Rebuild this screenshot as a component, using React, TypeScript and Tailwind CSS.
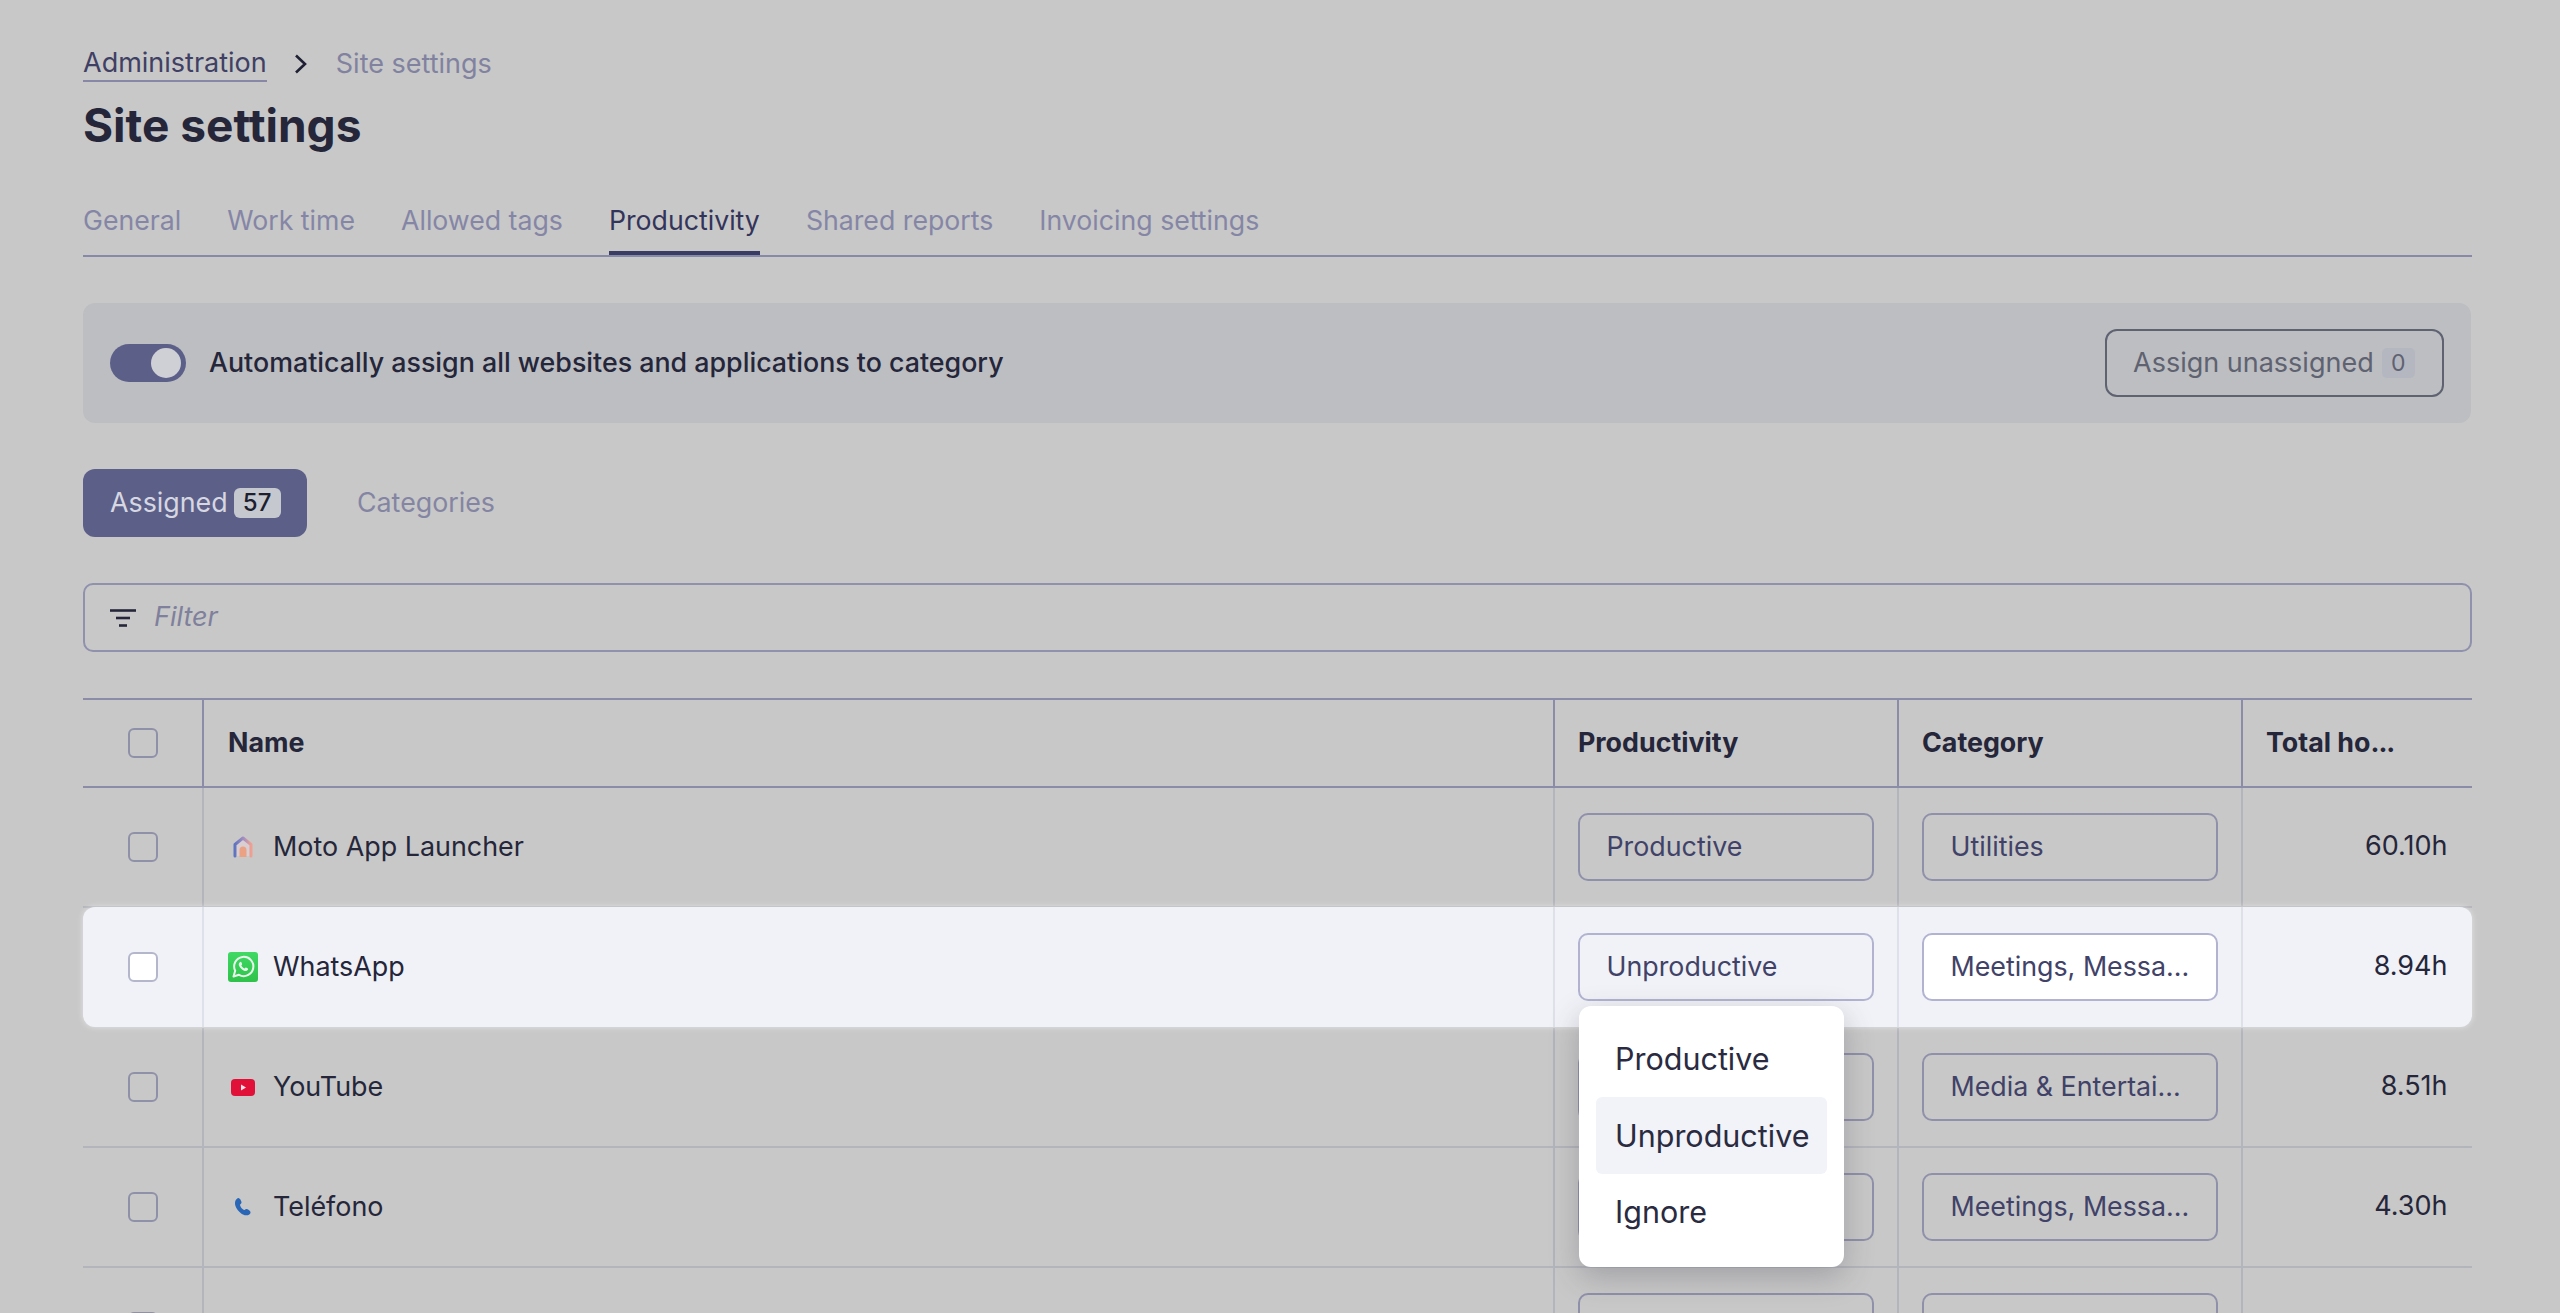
import React from "react";

const tabs = ["General", "Work time", "Allowed tags", "Productivity", "Shared reports", "Invoicing settings"];

function MotoIcon() {
  return (
    <svg width="22" height="24" viewBox="0 0 22 24" fill="none">
      <defs>
        <linearGradient id="moto" x1="0" y1="0" x2="1" y2="0">
          <stop offset="0" stopColor="#5f74c0" />
          <stop offset="0.55" stopColor="#a58fc0" />
          <stop offset="1" stopColor="#f0a090" />
        </linearGradient>
      </defs>
      <path d="M3 21 V9.5 L11 3 L19 9.5 V21 Z" fill="#d9ced2" />
      <path d="M3 21 V9.5 L11 3 L19 9.5 V21" stroke="url(#moto)" strokeWidth="3" strokeLinejoin="round" strokeLinecap="round" />
      <path d="M7.5 22 V15 a3.5 3.5 0 0 1 7 0 V22 Z" fill="#eba184" />
    </svg>
  );
}

function WhatsAppIcon() {
  return (
    <svg width="30" height="30" viewBox="0 0 30 30" className="rounded-[3px]">
      <defs>
        <linearGradient id="wa" x1="0" y1="0" x2="0" y2="1">
          <stop offset="0" stopColor="#3fd964" />
          <stop offset="1" stopColor="#2fc24a" />
        </linearGradient>
      </defs>
      <rect width="30" height="30" fill="url(#wa)" />
      <path d="M5.5 24.5 L7.2 18.8 A9.6 9.6 0 1 1 11 22.8 Z" fill="none" stroke="#e9f8ec" strokeWidth="2" strokeLinejoin="round" />
      <path d="M11.6 10.4 c1-1 1.6-.7 2 .3 l.5 1.2 c.2.5-.6 1.2-.8 1.6 .8 1.5 1.8 2.4 3.2 3.1 .5-.3 1-1.2 1.6-1 l1.3.6 c.9.4 1 1 .3 1.9 -1 1.1-2.6 1-4.1.3 -2.2-1-3.8-2.7-4.6-4.8 -.4-1.3-.3-2.4.6-3.2 Z" fill="#e9f8ec" />
    </svg>
  );
}

function YouTubeIcon() {
  return (
    <svg width="24" height="17" viewBox="0 0 24 17">
      <rect width="24" height="17" rx="4" fill="#e01038" />
      <path d="M10 5.5 L15 8.5 L10 11.5 Z" fill="#f8e4e8" />
    </svg>
  );
}

function PhoneIcon() {
  return (
    <svg width="18" height="20" viewBox="0 0 18 20">
      <path
        d="M4 1 C5.5 .5 7 3 7.5 5 C7.8 6.5 6.2 7 6 8 C6.5 10 8 12 10 13 C11 13 11.5 11.5 13 12 C15 12.7 17 14.5 16.5 16 C15.5 18.5 12 19 9 17.5 C5 15.5 1.5 11 1 7 C.7 4.5 2 1.7 4 1 Z"
        fill="#2a66b8"
      />
    </svg>
  );
}

function FilterIcon() {
  return (
    <svg width="26" height="20" viewBox="0 0 26 20" fill="none" stroke="#25263a" strokeWidth="2.6">
      <path d="M0 2.5 H26" />
      <path d="M6 10 H20" />
      <path d="M9 17.5 H17" />
    </svg>
  );
}

function Check({ white }: { white?: boolean }) {
  return <div className={`h-[30px] w-[30px] rounded-[6px] border-2 ${white ? "border-[#b4b6cc] bg-white" : "border-[#8f91a8]"}`} />;
}

function Select({ text, bg, hl }: { text: string; bg?: boolean; hl?: boolean }) {
  return (
    <div
      className={`flex h-[68px] w-[296px] items-center rounded-[10px] border-2 pb-[2px] pl-[26.5px] text-[26.8px] text-[#414268] ${
        hl ? "border-[#b2b3d0]" : "border-[#8f91aa]"
      } ${bg ? "bg-white" : ""}`}
    >
      {text}
    </div>
  );
}

const rows: { name: string; icon: React.ReactNode; prod: string; cat: string; hours: string }[] = [
  { name: "Moto App Launcher", icon: <MotoIcon />, prod: "Productive", cat: "Utilities", hours: "60.10h" },
  { name: "WhatsApp", icon: <WhatsAppIcon />, prod: "Unproductive", cat: "Meetings, Messa...", hours: "8.94h" },
  { name: "YouTube", icon: <YouTubeIcon />, prod: "", cat: "Media & Entertai...", hours: "8.51h" },
  { name: "Teléfono", icon: <PhoneIcon />, prod: "", cat: "Meetings, Messa...", hours: "4.30h" },
  { name: "", icon: null, prod: "", cat: "", hours: "" },
];

function Row({ row, hl }: { row: (typeof rows)[number]; hl: boolean }) {
  const line = hl ? "border-[#dfe1e8]" : "border-[#b3b5bc]";
  return (
    <div
      className={`relative flex h-[120px] w-[2389px] text-[26.9px] text-[#25263a] ${
        hl ? "z-10 -mt-px mb-px rounded-[12px] bg-[#f0f2f7] shadow-[0_0_6px_rgba(255,255,255,0.5)]" : "border-b-2 border-[#b3b5bc]"
      }`}
    >
      <div className="flex w-[119px] shrink-0 items-center justify-center">
        <Check white={hl} />
      </div>
      <div className={`flex min-w-0 flex-1 items-center border-l-2 pl-[24px] ${line}`}>
        <div className="flex w-[30px] justify-center">{row.icon}</div>
        <span className="mb-[2px] ml-[15px]">{row.name}</span>
      </div>
      <div className={`relative flex w-[344px] shrink-0 items-center border-l-2 pl-[23px] ${line}`}>
        <Select text={row.prod} hl={hl} />
        {hl && (
          <div className="absolute left-[24px] top-[99px] z-20 h-[261px] w-[265px] rounded-[12px] bg-white px-[17px] pt-[15px] text-[30.5px] text-[#2a2b40] shadow-[0_10px_30px_rgba(60,60,80,0.28)]">
            <div className="flex h-[76px] items-center rounded-[6px] pl-[19px]">Productive</div>
            <div className="flex h-[77px] items-center rounded-[6px] bg-[#f1f3f8] pl-[19px]">Unproductive</div>
            <div className="flex h-[76px] items-center rounded-[6px] pl-[19px]">Ignore</div>
          </div>
        )}
      </div>
      <div className={`flex w-[344px] shrink-0 items-center border-l-2 pl-[23px] ${line}`}>
        <Select text={row.cat} bg={hl} hl={hl} />
      </div>
      <div className={`flex w-[231px] shrink-0 items-center justify-end border-l-2 pb-[2px] pr-[24.5px] text-[27px] ${line}`}>{row.hours}</div>
    </div>
  );
}

export default function App() {
  return (
    <div className="h-[1313px] w-[2560px] overflow-hidden bg-[#c8c8c8] pl-[83px] pt-[45px] font-['Inter',sans-serif]">
      <div className="flex h-[37px] items-center text-[27px] leading-[36px]">
        <span className="h-[37px] border-b-2 border-[#8788a8] pt-[1px] leading-[34px] text-[#3f4064]">Administration</span>
        <svg className="ml-[27px] mr-[29px]" width="13" height="20" viewBox="0 0 13 20" fill="none" stroke="#1f2033" strokeWidth="2.6">
          <path d="M2 1.5 L11 10 L2 18.5" />
        </svg>
        <span className="text-[#8182a0]">Site settings</span>
      </div>
      <h1 className="mt-[15px] h-[56px] text-[46px] font-bold leading-[56px] text-[#25263a]">Site settings</h1>

      <div className="mt-[49px] flex w-[2389px] gap-[46px] border-b-2 border-[#8889a8] text-[26.7px] leading-[37px] text-[#8586a6]">
        {tabs.map((t) => (
          <div key={t} className={`border-b-4 pb-[12px] ${t === "Productivity" ? "border-[#3b3c63] text-[#33345a]" : "border-transparent"}`}>
            {t}
          </div>
        ))}
      </div>

      <div className="mt-[46px] flex h-[120px] w-[2388px] items-center rounded-[12px] bg-[#bcbec2] pl-[27px] pr-[27px]">
        <div className="flex h-[38px] w-[76px] items-center justify-end rounded-full bg-[#5c6088] pr-[5px]">
          <div className="h-[30px] w-[30px] rounded-full bg-[#cfd0d6]" />
        </div>
        <span className="mb-[2px] ml-[23px] text-[26.8px] font-medium text-[#25263a]">Automatically assign all websites and applications to category</span>
        <div className="ml-auto flex h-[68px] w-[339px] items-center rounded-[12px] border-2 border-[#5f6270] pl-[26px] text-[27px] text-[#5f6270]">
          Assign unassigned
          <span className="ml-[8px] flex h-[30px] w-[33px] items-center justify-center rounded-[5px] bg-[#b4b7c0] text-[23px]">0</span>
        </div>
      </div>

      <div className="mt-[46px] flex h-[68px] items-center text-[26.8px]">
        <div className="flex h-[68px] w-[224px] items-center rounded-[12px] bg-[#5c6088] pl-[27px] text-[#d6d7e2]">
          <span className="mb-[1px]">Assigned</span>
          <span className="ml-[6px] flex h-[30px] w-[47px] items-center justify-center rounded-[6px] bg-[#c6c8d0] text-[24px] font-medium text-[#1e1f2e]">57</span>
        </div>
        <span className="mb-[1px] ml-[50px] text-[#8485a3]">Categories</span>
      </div>

      <div className="mt-[46px] flex h-[69px] w-[2389px] items-center rounded-[10px] border-2 border-[#8f91ad] pl-[25px]">
        <FilterIcon />
        <span className="ml-[18px] text-[27px] italic text-[#7f809c]">Filter</span>
      </div>

      <div className="mt-[46px] w-[2389px]">
        <div className="flex h-[90px] w-[2389px] border-y-2 border-[#8b8da8] text-[26.8px] font-bold text-[#25263a]">
          <div className="flex w-[119px] shrink-0 items-center justify-center">
            <Check />
          </div>
          <div className="flex flex-1 items-center border-l-2 border-[#8b8da8] pb-[2px] pl-[24px]">Name</div>
          <div className="flex w-[344px] shrink-0 items-center border-l-2 border-[#8b8da8] pb-[2px] pl-[23px]">Productivity</div>
          <div className="flex w-[344px] shrink-0 items-center border-l-2 border-[#8b8da8] pb-[2px] pl-[23px]">Category</div>
          <div className="flex w-[231px] shrink-0 items-center border-l-2 border-[#8b8da8] pb-[2px] pl-[23px]">
            Total ho<span className="tracking-[-1px]">...</span>
          </div>
        </div>
        {rows.map((r) => (
          <Row key={r.name || "more"} row={r} hl={r.name === "WhatsApp"} />
        ))}
      </div>
    </div>
  );
}
